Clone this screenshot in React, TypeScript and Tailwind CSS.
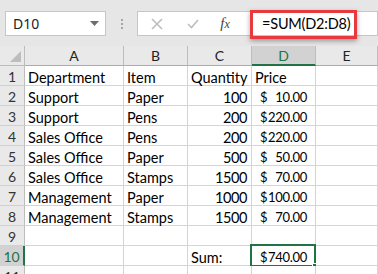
import { ReactNode } from 'react';

const cellFont = { fontFamily: 'Lato, "Liberation Sans", sans-serif' };
const uiFont = { fontFamily: '"Noto Sans", "Liberation Sans", sans-serif' };

type Row = [string, string, string, string];

const rows: Row[] = [
  ['Department', 'Item', 'Quantity', 'Price'],
  ['Support', 'Paper', '100', '10.00'],
  ['Support', 'Pens', '200', '220.00'],
  ['Sales Office', 'Pens', '200', '220.00'],
  ['Sales Office', 'Paper', '500', '50.00'],
  ['Sales Office', 'Stamps', '1500', '70.00'],
  ['Management', 'Paper', '1000', '100.00'],
  ['Management', 'Stamps', '1500', '70.00'],
];

const cols = ['A', 'B', 'C', 'D', 'E'];

const Cell = ({ children, className = '' }: { children?: ReactNode; className?: string }) => (
  <div
    className={`relative h-[20px] border-r border-b border-[#d4d4d4] bg-white text-[14.5px] leading-[20px] text-black whitespace-nowrap ${className}`}
    style={cellFont}
  >
    {children}
  </div>
);

const Money = ({ value }: { value: string }) => (
  <div className="flex h-full w-full items-center justify-between pl-[8px] pr-[8px] pt-[2px] text-[13px] tracking-[-0.3px]">
    <span>$</span>
    <span>{value}</span>
  </div>
);

const RowHead = ({ n, active }: { n: number; active?: boolean }) => (
  <div
    className={`flex h-[20px] items-center justify-center border-b border-[#d0d0d0] pt-[2px] text-[14px] ${
      active
        ? 'border-r-2 border-r-[#217346] bg-[#d2d2d2] text-[#217346]'
        : 'border-r border-r-[#bdbdbd] bg-[#e9e9e9] text-[#333]'
    }`}
    style={cellFont}
  >
    {n}
  </div>
);

export default function App() {
  return (
    <div className="relative h-[274px] w-[378px] overflow-hidden bg-[#e6e6e6]">
      {/* formula bar */}
      <div className="flex h-[46px] items-start pt-[11px]" style={uiFont}>
        <div className="ml-[5px] flex h-[25px] w-[101px] items-center justify-between border border-[#c6c6c6] bg-white pl-[7px] pr-[6px]">
          <span className="text-[14px] text-[#222]">D10</span>
          <svg width="9" height="5" viewBox="0 0 9 5">
            <path d="M0 0h9L4.5 5z" fill="#6d6d6d" />
          </svg>
        </div>
        <div className="flex h-[25px] w-[31px] flex-col items-center justify-center gap-[2px]">
          <span className="h-[2px] w-[2px] bg-[#a6a6a6]" />
          <span className="h-[2px] w-[2px] bg-[#a6a6a6]" />
          <span className="h-[2px] w-[2px] bg-[#a6a6a6]" />
        </div>
        <div className="flex h-[25px] flex-1 items-center border border-[#c6c6c6] bg-white">
          <div className="flex w-[38px] justify-center">
            <svg width="12" height="12" viewBox="0 0 12 12">
              <path d="M1 1l10 10M11 1L1 11" stroke="#bdbdbd" strokeWidth="1.6" />
            </svg>
          </div>
          <div className="flex w-[34px] justify-center">
            <svg width="12" height="10" viewBox="0 0 12 10">
              <path d="M1 5l3.5 3.5L11 1" stroke="#bdbdbd" strokeWidth="1.6" fill="none" />
            </svg>
          </div>
          <div className="flex w-[30px] justify-center">
            <span
              className="text-[15px] italic text-[#444]"
              style={{ fontFamily: '"Liberation Serif", serif' }}
            >
              f<span className="text-[12px]">x</span>
            </span>
          </div>
          <span className="pl-[22px] text-[14.5px] tracking-[-0.2px] text-black" style={cellFont}>
            =SUM(D2:D8)
          </span>
        </div>
      </div>

      {/* red annotation box */}
      <div className="absolute left-[250px] top-[10px] h-[29px] w-[107px] border-[3px] border-[#e8393e] shadow-[0_2px_5px_rgba(0,0,0,0.35)]" />

      {/* sheet */}
      <div className="grid grid-cols-[25px_99px_64px_64px_64px_1fr]">
        <div className="relative h-[20px] border-r border-b border-[#bdbdbd] bg-[#e9e9e9]">
          <svg className="absolute bottom-[3px] right-[3px]" width="11" height="11" viewBox="0 0 11 11">
            <path d="M11 0v11H0z" fill="#bdbdbd" />
          </svg>
        </div>
        {cols.map((c) => (
          <div
            key={c}
            className={`flex h-[20px] items-center justify-center border-r border-[#bdbdbd] text-[14px] ${
              c === 'D'
                ? 'border-b-2 border-b-[#217346] bg-[#d2d2d2] text-[#217346]'
                : 'border-b border-b-[#ababab] bg-[#e9e9e9] text-[#222]'
            }`}
            style={cellFont}
          >
            {c}
          </div>
        ))}

        {rows.map((r, i) => (
          <div key={i} className="contents">
            <RowHead n={i + 1} />
            <Cell className="pl-[3px] pt-[2px]">{r[0]}</Cell>
            <Cell className="pl-[3px] pt-[2px]">{r[1]}</Cell>
            <Cell className={`pt-[2px] ${i === 0 ? 'pl-[3px]' : 'pr-[4px] text-right text-[13.5px] tracking-[-0.4px]'}`}>
              {r[2]}
            </Cell>
            <Cell>{i === 0 ? <div className="pl-[3px] pt-[2px]">{r[3]}</div> : <Money value={r[3]} />}</Cell>
            <Cell />
          </div>
        ))}

        <RowHead n={9} />
        <Cell />
        <Cell />
        <Cell />
        <Cell />
        <Cell />

        <RowHead n={10} active />
        <Cell />
        <Cell />
        <Cell className="pl-[3px] pt-[2px]">Sum:</Cell>
        <Cell>
          <Money value="740.00" />
          <div className="absolute -left-[2px] -top-[2px] h-[23px] w-[66px] border-2 border-[#217346]" />
          <div className="absolute -bottom-[4px] -right-[3px] h-[6px] w-[6px] border border-white bg-[#217346]" />
        </Cell>
        <Cell />

        <RowHead n={11} />
        <Cell />
        <Cell />
        <Cell />
        <Cell />
        <Cell />
      </div>
    </div>
  );
}
